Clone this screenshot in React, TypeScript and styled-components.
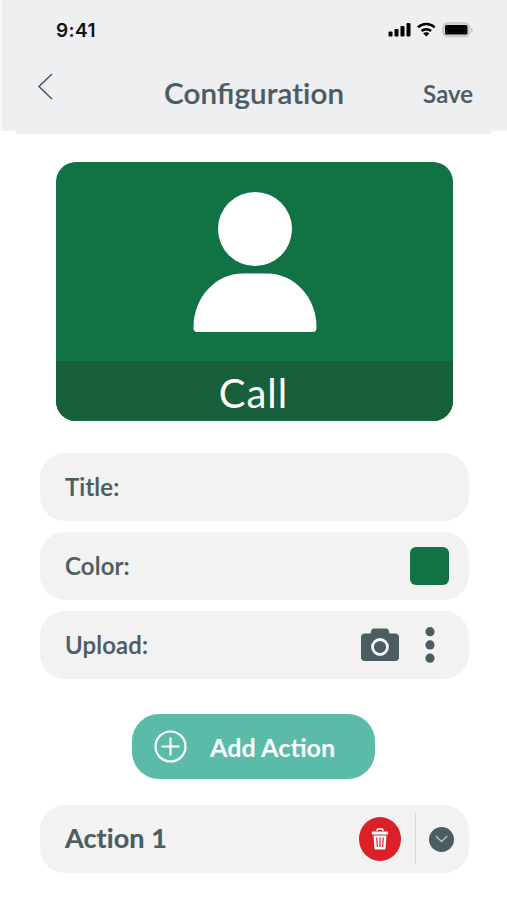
import React from "react";
import styled, { createGlobalStyle } from "styled-components";

const slate = "#4b5c63";
const green = "#117243";

const GlobalStyle = createGlobalStyle`
  * { box-sizing: border-box; }
  html, body { margin: 0; padding: 0; background: #fff; overflow: hidden; }
  body { font-family: Lato, "Liberation Sans", sans-serif; color: ${slate}; }
  button { border: 0; padding: 0; margin: 0; background: none; color: inherit; font: inherit; }
  svg { display: block; flex: none; }
`;

const Screen = styled.div`
  width: 507px;
  height: 900px;
  background: #fff;
`;

const Header = styled.header`
  height: 134px;
  background:
    linear-gradient(#edeff1, #edeff1) 2px 0 / 505px 131px no-repeat,
    linear-gradient(#edeff1, #edeff1) 16px 0 / 476px 134px no-repeat,
    linear-gradient(#f6f8f9, #f6f8f9) 0 0 / 2px 131px no-repeat;
`;

const StatusBar = styled.div`
  height: 60px;
  padding: 0 34px 0 56px;
  display: flex;
  align-items: center;
  justify-content: space-between;
`;

const Clock = styled.span`
  font: 600 19px/24px Inter, sans-serif;
  letter-spacing: 0.4px;
  color: #101214;
  padding-top: 2px;
`;

const NavBar = styled.nav`
  height: 66px;
  display: grid;
  grid-template-columns: 164px 1fr 164px;
  align-items: center;
`;

const BackButton = styled.button`
  margin: -14px 0 0 37px;
  justify-self: start;
`;

const Heading = styled.h1`
  margin: 0;
  font-size: 29.5px;
  line-height: 36px;
  font-weight: 600;
  letter-spacing: 0.12px;
  white-space: nowrap;
  -webkit-text-stroke: 0.2px currentColor;
`;

const Ligature = styled.span`
  letter-spacing: 0;
`;

const SaveButton = styled.button`
  justify-self: end;
  margin: 2px 35px 0 0;
  font-size: 24px;
  line-height: 30px;
  font-weight: 600;
  letter-spacing: 0.1px;
  -webkit-text-stroke: 0.2px currentColor;
`;

const Main = styled.main`
  padding: 28px 38px 0 40px;
`;

const Tile = styled.section`
  width: 397px;
  height: 259px;
  margin-left: 16px;
  border-radius: 20px;
  overflow: hidden;
  background: ${green};
  display: flex;
  flex-direction: column;
  align-items: center;
`;

const TilePicture = styled.div`
  height: 199px;
  padding-top: 29px;
`;

const TileCaption = styled.div`
  width: 100%;
  height: 60px;
  border-bottom: 1px solid ${green};
  background: #185f3b;
  color: #fff;
  font-size: 40px;
  line-height: 64px;
  letter-spacing: 1px;
  text-align: center;
  padding-right: 2px;
`;

const Fields = styled.section`
  margin-top: 32px;
  display: grid;
  gap: 11px;
`;

const Row = styled.div<{ $right: number }>`
  height: 68px;
  border-radius: 25px;
  background: #f2f2f2;
  padding: 0 ${(p) => p.$right}px 0 25px;
  display: flex;
  align-items: center;
`;

const Label = styled.span<{ $strong?: boolean }>`
  flex: 1;
  font-size: ${(p) => (p.$strong ? 27 : 24)}px;
  line-height: 32px;
  font-weight: ${(p) => (p.$strong ? 700 : 600)};
  letter-spacing: ${(p) => (p.$strong ? 0.1 : 0.15)}px;
  padding-bottom: ${(p) => (p.$strong ? 2 : 1)}px;
  -webkit-text-stroke: 0.2px currentColor;
`;

const Swatch = styled.button`
  width: 39px;
  height: 38px;
  border-radius: 6px;
  background: ${green};
`;

const IconButton = styled.button<{ $gap?: number }>`
  margin-left: ${(p) => p.$gap ?? 0}px;
`;

const AddButton = styled.button`
  width: 243px;
  height: 65px;
  margin: 35px 0 26px 92px;
  padding-left: 22px;
  border-radius: 27px;
  background: #5abba9;
  color: #fff;
  display: flex;
  align-items: center;
  gap: 23px;
  font-size: 25.2px;
  line-height: 32px;
  font-weight: 700;
`;

const DeleteButton = styled.button`
  width: 42px;
  height: 44px;
  border-radius: 50%;
  background: #db2128;
  display: grid;
  place-items: center;
`;

const Divider = styled.span`
  width: 1px;
  height: 52px;
  margin: 0 13px 0 14px;
  background: #d8d8d8;
`;

const ExpandButton = styled.button`
  width: 25px;
  height: 25px;
  border-radius: 50%;
  background: ${slate};
  display: grid;
  place-items: center;
`;

const StatusIcons = () => (
  <svg width="85" height="16" viewBox="0 0 85 16">
    <g fill="#000">
      <rect x="0.5" y="9.500" width="4" height="5" rx="1" />
      <rect x="6.5" y="7" width="4" height="7.5" rx="1" />
      <rect x="12.5" y="4" width="4" height="10.5" rx="1" />
      <rect x="18.5" y="1" width="4" height="13.5" rx="1" />
      <path d="M38.300 10.300c1.300 0 2.400.5 3.100 1.200L38.300 14.500l-3.100-3C35.900 10.800 37 10.300 38.300 10.300z" />
    </g>
    <path d="M30 5.300c4.700-4.300 12-4.300 16.700 0M33.500 9c2.700-2.500 6.900-2.500 9.600 0" fill="none" stroke="#000" strokeWidth="2.500" />
    <rect x="55" y="1" width="26.500" height="13.500" rx="4.500" fill="#d5d6d8" stroke="#c5c6c8" strokeWidth="1.700" />
    <rect x="57" y="3" width="22.500" height="9.500" rx="1.500" />
    <path d="M83 5.500c2.500.8 2.500 4.200 0 5z" fill="#c5c6c8" />
  </svg>
);

const BackIcon = () => (
  <svg width="17" height="27" viewBox="0 0 17 27">
    <path d="M15 1L2 13.500L15 26" fill="none" stroke={slate} strokeWidth="1.600" />
  </svg>
);

const PersonIcon = () => (
  <svg width="124" height="142" viewBox="0 0 124 142" fill="#fff">
    <circle cx="62" cy="38" r="37" />
    <path d="M50 82.500H74C102 82.500 123.500 107 123.500 136V137Q123.500 141 119.500 141H4.500Q.5 141 .5 137V136C.5 107 22 82.500 50 82.500z" />
  </svg>
);

const CameraIcon = () => (
  <svg width="38" height="34" viewBox="0 0 38 34">
    <path d="M4 5.500H9.500L10.500 2Q11 .5 12.500 .5H25.500Q27 .5 27.500 2L28.500 5.500H34Q38 5.500 38 9.500V29Q38 33 34 33H4Q0 33 0 29V9.500Q0 5.500 4 5.500z" fill={slate} />
    <circle cx="19" cy="19" r="7.500" fill="none" stroke="#f5f6f6" strokeWidth="2.800" />
  </svg>
);

const DotsIcon = () => (
  <svg width="10" height="37" viewBox="0 0 10 37" fill={slate}>
    <circle cx="5" cy="4.700" r="4.600" />
    <circle cx="5" cy="17.900" r="4.600" />
    <circle cx="5" cy="31.200" r="4.600" />
  </svg>
);

const PlusIcon = () => (
  <svg width="33" height="33" viewBox="0 0 33 33" fill="none" stroke="#fff" strokeWidth="2.200">
    <circle cx="16.500" cy="16.500" r="15" />
    <path d="M16.500 7.500V25.500M7.500 16.500H25.500" />
  </svg>
);

const TrashIcon = () => (
  <svg width="18" height="24" viewBox="0 0 18 24">
    <path d="M6 4V2.800Q6 2 7 2H11Q12 2 12 2.800V4" fill="none" stroke="#fff" strokeWidth="1.300" />
    <path d="M2 4.500H16Q17 4.500 17 5.500V7.500H1V5.500Q1 4.500 2 4.500zM2.500 8.500H15.500L14.600 21Q14.500 22.500 13 22.500H5Q3.500 22.500 3.400 21z" fill="#fff" />
    <path d="M5.700 10.500L6.400 20M9 10.500V20M12.300 10.500L11.600 20" stroke="#db2128" strokeWidth="1.200" />
  </svg>
);

const ChevronIcon = () => (
  <svg width="13" height="8" viewBox="0 0 13 8">
    <path d="M.8 1L6.500 6.500L12.200 1" fill="none" stroke="#b8c3c7" strokeWidth="1.400" />
  </svg>
);

export default function App() {
  return (
    <Screen>
      <GlobalStyle />
      <Header>
        <StatusBar>
          <Clock>9:41</Clock>
          <StatusIcons />
        </StatusBar>
        <NavBar>
          <BackButton aria-label="Back"><BackIcon /></BackButton>
          <Heading>Con<Ligature>fi</Ligature>guration</Heading>
          <SaveButton>Save</SaveButton>
        </NavBar>
      </Header>
      <Main>
        <Tile>
          <TilePicture><PersonIcon /></TilePicture>
          <TileCaption>Call</TileCaption>
        </Tile>
        <Fields>
          <Row $right={20}><Label>Title:</Label></Row>
          <Row $right={20}>
            <Label>Color:</Label>
            <Swatch aria-label="Choose color" />
          </Row>
          <Row $right={34}>
            <Label>Upload:</Label>
            <IconButton aria-label="Camera"><CameraIcon /></IconButton>
            <IconButton $gap={26} aria-label="More"><DotsIcon /></IconButton>
          </Row>
        </Fields>
        <AddButton><PlusIcon />Add Action</AddButton>
        <Row $right={15}>
          <Label $strong>Action 1</Label>
          <DeleteButton aria-label="Delete"><TrashIcon /></DeleteButton>
          <Divider />
          <ExpandButton aria-label="Expand"><ChevronIcon /></ExpandButton>
        </Row>
      </Main>
    </Screen>
  );
}
